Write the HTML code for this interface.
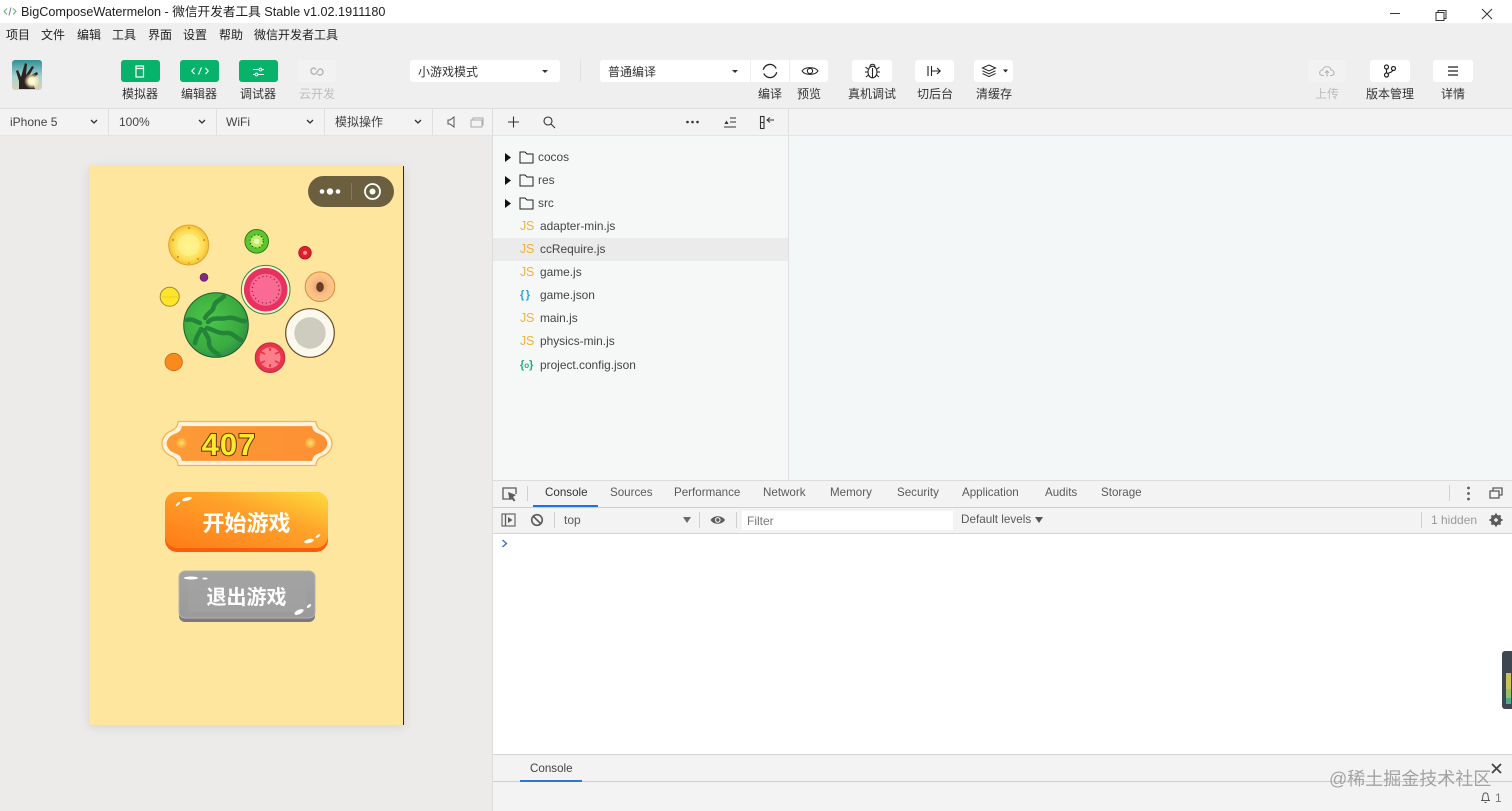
<!DOCTYPE html>
<html lang="zh"><head><meta charset="utf-8"><title>BigComposeWatermelon</title>
<style>
html,body{margin:0;padding:0;width:1512px;height:811px;overflow:hidden;background:#fff}
body{position:relative;font:12px "Liberation Sans","Noto Sans CJK SC",sans-serif;color:#333;filter:blur(.3px)}
.a{position:absolute}
.t{position:absolute;white-space:nowrap;line-height:16px}
.c{transform:translateX(-50%)}
.b{position:absolute;background:#fff;border-radius:3px;top:60px;height:22px}
.g{background:#07b36a}
svg{position:absolute;overflow:visible}
.tab{position:absolute;top:486px;line-height:14px;color:#5a5a5a;font-size:11.6px;white-space:nowrap}
.f{position:absolute;left:540px;line-height:16px;color:#444;white-space:nowrap;font-size:11.9px}
.d{position:absolute;left:520px;font-weight:400;color:#f0b03c;font-size:12.5px;line-height:16px;letter-spacing:-.3px}
</style></head><body>

<!-- title bar -->
<div class="a" style="left:0;top:0;width:1512px;height:23px;background:#fff"></div>
<svg style="left:3px;top:6px" width="14" height="11" fill="none" stroke="#5fb878" stroke-width="1.1"><path d="M4 2.500 1 5.500 4 8.500M10 2.500 13 5.500 10 8.500"/><path d="M8 1.500 6 9.500" stroke="#888"/></svg>
<div class="t" style="left:21px;top:4px;font-size:12.65px;color:#222">BigComposeWatermelon - 微信开发者工具 Stable v1.02.1911180</div>
<svg style="left:1390px;top:8px" width="110" height="14" fill="none" stroke="#333" stroke-width="1"><path d="M0 5.500H10"/><path d="M46 4.500h8v8h-8zM48 4.500V2.500h8v8h-2"/><path d="M92 1 102 11M102 1 92 11"/></svg>

<!-- toolbar -->
<div class="a" style="left:0;top:23px;width:1512px;height:85px;background:#efefef"></div>
<div class="a" style="left:0;top:108px;width:1512px;height:1px;background:#dedede"></div>
<div class="t" style="left:6px;top:27px;color:#222">项目</div>
<div class="t" style="left:41px;top:27px;color:#222">文件</div>
<div class="t" style="left:77px;top:27px;color:#222">编辑</div>
<div class="t" style="left:112px;top:27px;color:#222">工具</div>
<div class="t" style="left:148px;top:27px;color:#222">界面</div>
<div class="t" style="left:183px;top:27px;color:#222">设置</div>
<div class="t" style="left:219px;top:27px;color:#222">帮助</div>
<div class="t" style="left:254px;top:27px;color:#222">微信开发者工具</div>

<!-- avatar -->
<svg style="left:12px;top:60px" width="30" height="30">
<defs><linearGradient id="sky" x1="0" y1="0" x2="0" y2="1"><stop offset="0" stop-color="#2f8f97"/><stop offset=".55" stop-color="#a8d3cf"/><stop offset="1" stop-color="#d9d2b8"/></linearGradient>
<radialGradient id="sun"><stop offset="0" stop-color="#fff"/><stop offset=".45" stop-color="#fff0b8"/><stop offset="1" stop-color="#fff0b8" stop-opacity="0"/></radialGradient></defs>
<rect width="30" height="30" rx="3" fill="url(#sky)"/>
<path d="M7 29 7 21 4 11 6 10 9 17 13 3 15 4 14 15 20 6 22 7 17 16 25 12 26 14 20 20 23 29Z" fill="#2a2220"/>
<circle cx="20" cy="21" r="8" fill="url(#sun)"/>
</svg>

<!-- mode buttons -->
<div class="b g" style="left:121px;width:39px"></div>
<svg style="left:135px;top:65px" width="10" height="13" fill="none" stroke="#fff" stroke-width="1.200"><rect x="1" y="1" width="7.500" height="11"/><path d="M1 3.500H8.500"/></svg>
<div class="b g" style="left:180px;width:39px"></div>
<svg style="left:191px;top:67px" width="18" height="9" fill="none" stroke="#fff" stroke-width="1.100"><path d="M3.500 1 .8 4 3.500 7M14.500 1 17.200 4 14.500 7M10.500 .5 7.500 7.500"/></svg>
<div class="b g" style="left:239px;width:39px"></div>
<svg style="left:253px;top:67px" width="11" height="10" fill="none" stroke="#fff" stroke-width="1"><path d="M0 2.500H6M9 2.500H11M0 7.500H2M5 7.500H11"/><circle cx="7.500" cy="2.500" r="1.400"/><circle cx="3.500" cy="7.500" r="1.400"/></svg>
<div class="b" style="left:298px;width:38px;background:#f2f2f2"></div>
<svg style="left:310px;top:65px" width="14" height="12" fill="none" stroke="#b5b5b5" stroke-width="1.400"><path d="M6 4.500C4.500 2 1 3 1 6s3 4 5 2.500L8.500 5C10 3 13 4.200 13 7s-3.500 4-5.500 2"/></svg>
<div class="t c" style="left:140px;top:86px">模拟器</div>
<div class="t c" style="left:199px;top:86px">编辑器</div>
<div class="t c" style="left:258px;top:86px">调试器</div>
<div class="t c" style="left:317px;top:86px;color:#bdbdbd">云开发</div>

<!-- selects -->
<div class="b" style="left:410px;width:150px"></div>
<div class="t" style="left:418px;top:64px">小游戏模式</div>
<div class="a" style="left:542px;top:70px;border:3px solid transparent;border-top:3px solid #333"></div>
<div class="a" style="left:580px;top:60px;width:1px;height:22px;background:#e0e0e0"></div>
<div class="b" style="left:600px;width:150px;border-radius:3px 0 0 3px"></div>
<div class="t" style="left:608px;top:64px">普通编译</div>
<div class="a" style="left:732px;top:70px;border:3px solid transparent;border-top:3px solid #333"></div>
<div class="b" style="left:751px;width:38px;border-radius:0"></div>
<div class="b" style="left:790px;width:38px;border-radius:0 3px 3px 0"></div>
<svg style="left:762px;top:63px" width="16" height="16" fill="none" stroke="#222" stroke-width="1.300"><path d="M1.300 6.800A6.800 6.800 0 0 1 14.200 5.500M14.700 9.200A6.800 6.800 0 0 1 1.800 10.500"/></svg>
<svg style="left:801px;top:65px" width="18" height="12" fill="none" stroke="#222" stroke-width="1.100"><path d="M1 6C4 1.500 14 1.500 17 6 14 10.500 4 10.500 1 6Z"/><circle cx="9" cy="6" r="2.600"/></svg>
<div class="b" style="left:852px;width:40px"></div>
<svg style="left:864px;top:63px" width="17" height="16" fill="none" stroke="#222" stroke-width="1.100"><ellipse cx="8.500" cy="9" rx="4.500" ry="5.800"/><path d="M6 3.500C6 .5 11 .5 11 3.500M8.500 5V14.500M4 6 1.500 4M13 6 15.500 4M4 9H1M13 9H16M4.500 12 2 14M12.500 12 15 14"/></svg>
<div class="b" style="left:915px;width:39px"></div>
<svg style="left:927px;top:65px" width="15" height="12" fill="none" stroke="#222" stroke-width="1.100"><path d="M1 1V11M4.500 1V11M4.500 6H13M10 3 13.200 6 10 9"/></svg>
<div class="b" style="left:974px;width:39px"></div>
<svg style="left:982px;top:64px" width="30" height="14" fill="none" stroke="#222" stroke-width="1"><path d="M7 1 13.500 4 7 7 .5 4Z"/><path d="M.5 6.800 7 9.800 13.500 6.800M.5 9.600 7 12.600 13.500 9.600"/><path d="M21 5.500H26L23.500 8.500Z" fill="#222" stroke="none"/></svg>
<div class="t c" style="left:770px;top:86px">编译</div>
<div class="t c" style="left:809px;top:86px">预览</div>
<div class="t c" style="left:872px;top:86px">真机调试</div>
<div class="t c" style="left:935px;top:86px">切后台</div>
<div class="t c" style="left:994px;top:86px">清缓存</div>

<div class="b" style="left:1308px;width:38px;background:#f2f2f2"></div>
<svg style="left:1319px;top:65px" width="16" height="12" fill="none" stroke="#b5b5b5" stroke-width="1.100"><path d="M5 10.500H3.500C-.5 10.500 0 5 3.500 5 4.500 .5 11.500 .5 12 5 16 5 16 10.500 12.500 10.500H11M8 11.500V6M6 7.800 8 5.800 10 7.800"/></svg>
<div class="b" style="left:1370px;width:40px"></div>
<svg style="left:1383px;top:64px" width="14" height="14" fill="none" stroke="#222" stroke-width="1.200"><circle cx="3.500" cy="3" r="2"/><circle cx="3.500" cy="11" r="2"/><circle cx="10.500" cy="4.500" r="2"/><path d="M3.500 5V9M9.500 6.500C9 8.500 6.500 8.500 5 9.500"/></svg>
<div class="b" style="left:1433px;width:40px"></div>
<svg style="left:1448px;top:66px" width="10" height="10" stroke="#222" stroke-width="1.200"><path d="M0 1H10M0 5H10M0 9H10"/></svg>
<div class="t c" style="left:1327px;top:86px;color:#bdbdbd">上传</div>
<div class="t c" style="left:1390px;top:86px">版本管理</div>
<div class="t c" style="left:1453px;top:86px">详情</div>

<!-- secondary row -->
<div class="a" style="left:0;top:109px;width:1512px;height:26px;background:#f3f3f3"></div>
<div class="a" style="left:0;top:135px;width:1512px;height:1px;background:#e3e3e3"></div>
<div class="a" style="left:108px;top:109px;width:1px;height:26px;background:#e0e0e0"></div>
<div class="a" style="left:216px;top:109px;width:1px;height:26px;background:#e0e0e0"></div>
<div class="a" style="left:324px;top:109px;width:1px;height:26px;background:#e0e0e0"></div>
<div class="a" style="left:432px;top:109px;width:1px;height:26px;background:#e0e0e0"></div>
<div class="a" style="left:492px;top:109px;width:1px;height:702px;background:#dcdcdc"></div>
<div class="a" style="left:788px;top:109px;width:1px;height:371px;background:#e0e0e0"></div>
<div class="t" style="left:10px;top:114px;color:#444">iPhone 5</div>
<div class="t" style="left:119px;top:114px;color:#444">100%</div>
<div class="t" style="left:226px;top:114px;color:#444">WiFi</div>
<div class="t" style="left:335px;top:114px;color:#444">模拟操作</div>
<svg style="left:0;top:0" width="1512" height="136" fill="none" stroke="#333" stroke-width="1.300"><path d="M91 120l3 3 3-3M199 120l3 3 3-3M307 120l3 3 3-3M415 120l3 3 3-3"/>
<path d="M448 120h2l4-3v10l-4-3h-2z" stroke-width="1" stroke="#555"/>
<g stroke="#aaa" stroke-width="1"><rect x="471" y="120" width="11" height="7"/><path d="M473 120v-2h10v7h-1"/></g>
<path d="M508 122H519M513.500 116.500V127.500" stroke-width="1.100"/>
<circle cx="548" cy="121" r="4" stroke-width="1.100"/><path d="M551 124 555 128" stroke-width="1.100"/>
<path d="M724 127H736M730 118H736M730 122H736" stroke-width="1.100"/><path d="M724.500 124 726.500 120.500 728.500 124Z" fill="#333" stroke="none"/>
<rect x="760.500" y="116.500" width="3.500" height="12" stroke-width="1.100"/><path d="M760.500 122.500H764M774 120H767M770 117.500 767 120 770 122.500" stroke-width="1"/>
</svg>
<svg style="left:686px;top:120px" width="13" height="4" fill="#333"><circle cx="1.500" cy="2" r="1.300"/><circle cx="6.500" cy="2" r="1.300"/><circle cx="11.500" cy="2" r="1.300"/></svg>

<!-- simulator -->
<div class="a" style="left:0;top:136px;width:492px;height:675px;background:#ecebe9"></div>
<div class="a" style="left:89px;top:166px;width:315px;height:559px;background:#fee69f;box-shadow:0 2px 10px rgba(0,0,0,.1);border-right:1px solid #2d2a20;box-sizing:border-box"></div>
<div class="a" style="left:308px;top:176px;width:86px;height:31px;border-radius:16px;background:#6b5f40"></div>
<svg style="left:308px;top:176px" width="86" height="31"><circle cx="14" cy="15.500" r="2.300" fill="#fff"/><circle cx="22" cy="15.500" r="3.200" fill="#fff"/><circle cx="30" cy="15.500" r="2.300" fill="#fff"/><path d="M43.500 7V24" stroke="#85795c"/><circle cx="64.500" cy="15.500" r="7.500" fill="none" stroke="#fff" stroke-width="1.800"/><circle cx="64.500" cy="15.500" r="3" fill="#fff"/></svg>

<!-- fruits -->
<svg style="left:0;top:0" width="492" height="640">
<defs>
<radialGradient id="pine"><stop offset="0" stop-color="#fff48c"/><stop offset=".7" stop-color="#fee05a"/><stop offset="1" stop-color="#f7c02f"/></radialGradient>
<radialGradient id="wm" cx=".4" cy=".4" r=".7"><stop offset="0" stop-color="#4cc548"/><stop offset=".7" stop-color="#3aaa40"/><stop offset="1" stop-color="#2c8448"/></radialGradient>
<radialGradient id="pe"><stop offset="0" stop-color="#e89a5a"/><stop offset=".6" stop-color="#f8bf84"/><stop offset="1" stop-color="#fdc98e"/></radialGradient>
<linearGradient id="ban" x1="0" y1="0" x2="1" y2="0"><stop offset="0" stop-color="#fd9a36"/><stop offset="1" stop-color="#fd9033"/></linearGradient>
<linearGradient id="st" x1="1" y1="0" x2="0" y2="1"><stop offset="0" stop-color="#fedc3a"/><stop offset=".4" stop-color="#fea32a"/><stop offset="1" stop-color="#fe7a18"/></linearGradient>
<linearGradient id="gr" x1="0" y1="0" x2="0" y2="1"><stop offset="0" stop-color="#a3a3a3"/><stop offset="1" stop-color="#9a9a9a"/></linearGradient>
<path id="plate" d="M178 421.500H316C316 427 320 430 323 431C328 433 332 438 332 443.500C332 449 328 454 323 456C320 457 316 460 316 465.500H178C178 460 174 457 171 456C166 454 162 449 162 443.500C162 438 166 433 171 431C174 430 178 427 178 421.500Z"/>
</defs>
<circle cx="188.700" cy="245" r="20" fill="url(#pine)" stroke="#e2a42c" stroke-width="1"/>
<circle cx="188.700" cy="245" r="11" fill="#fff390" opacity=".7"/>
<g fill="#c98a1e"><circle cx="189" cy="228" r="1"/><circle cx="173" cy="240" r="1"/><circle cx="204" cy="240" r="1"/><circle cx="178" cy="257" r="1"/><circle cx="198" cy="259" r="1"/><circle cx="189" cy="263" r=".8"/></g>
<circle cx="256.700" cy="241.300" r="11.800" fill="#5ec62c" stroke="#2f7a22" stroke-width="1"/><circle cx="256.700" cy="241.300" r="6.500" fill="#b9ee62"/><circle cx="256.700" cy="241.300" r="2.800" fill="#eaf9b0"/>
<circle cx="256.700" cy="241.300" r="6.500" fill="none" stroke="#234" stroke-width="1.200" stroke-dasharray="1 2.500"/>
<circle cx="305" cy="252.700" r="6.300" fill="#e21d2e" stroke="#a4121f" stroke-width=".8"/><circle cx="305" cy="252.700" r="2" fill="#f98"/>
<circle cx="204" cy="277.300" r="4" fill="#7e2a80" stroke="#5a1c5c" stroke-width=".6"/>
<circle cx="265.700" cy="289.700" r="24.300" fill="#fdf6c8" stroke="#2e8a4a" stroke-width="1"/><circle cx="265.700" cy="289.700" r="21.800" fill="#e7315f"/><circle cx="265.700" cy="289.700" r="16" fill="#fb6a92"/><circle cx="265.700" cy="289.700" r="13.500" fill="none" stroke="#7c1c3c" stroke-width="1.200" stroke-dasharray="1 3"/>
<circle cx="320" cy="286.700" r="14.800" fill="url(#pe)" stroke="#e0883a" stroke-width="1"/><ellipse cx="320" cy="287" rx="3.800" ry="5" fill="#6a3a2a"/>
<circle cx="169.700" cy="296.700" r="9.500" fill="#fee529" stroke="#9c8a30" stroke-width="1"/><path d="M162 297H177" stroke="#f5c030" stroke-width=".8"/>
<circle cx="216" cy="325" r="32.300" fill="url(#wm)" stroke="#1e5c30" stroke-width="1"/>
<g fill="none" stroke="#24853a" stroke-width="4.500" stroke-linecap="round"><path d="M205 318C208 312 213 312 214 306 215 301 220 301 224 296"/><path d="M208 322C214 316 220 320 227 318 234 316 240 322 245 321"/><path d="M207 328C214 330 219 334 226 333 232 332 236 338 241 340"/><path d="M204 330C206 336 210 338 209 344 210 350 215 352 219 355"/><path d="M201 329C199 334 196 336 195 343"/><path d="M200 323C196 322 192 318 187 320"/></g>
<circle cx="310" cy="333" r="24.300" fill="#fbf8ee" stroke="#6a4a2a" stroke-width="1.200"/><circle cx="310" cy="333" r="15.700" fill="#cdccbf"/>
<circle cx="270" cy="357.700" r="14.800" fill="#e8344c" stroke="#c62840" stroke-width="1"/><circle cx="270" cy="357.700" r="10.500" fill="#fb7e88"/>
<g stroke="#e8344c" stroke-width="1.800" fill="none"><path d="M261 352l4 2M261 363l4-2M270 348v3M270 367v-3M279 352l-4 2M279 363l-4-2"/></g>
<circle cx="173.700" cy="362" r="8.700" fill="#fb8a1c" stroke="#c46a14" stroke-width=".8"/>

<!-- score banner -->
<use href="#plate" fill="#fff3dc" stroke="#f6b352" stroke-width="1.300"/>
<use href="#plate" fill="url(#ban)" stroke="none" transform="translate(247 443.500) scale(.945 .79) translate(-247 -443.500)"/>
<circle cx="181.500" cy="443" r="5" fill="#f9b548"/><circle cx="181.500" cy="443" r="2.500" fill="#fdd35e"/>
<circle cx="310.500" cy="443" r="5" fill="#f9b548"/><circle cx="310.500" cy="443" r="2.500" fill="#fdd35e"/>
<text x="229" y="455" text-anchor="middle" font-family="'Liberation Sans',sans-serif" font-weight="700" font-size="31" letter-spacing="1" fill="#ffe92e" stroke="#5e3b10" stroke-width="2" paint-order="stroke">407</text>

<!-- start -->
<rect x="165" y="492" width="163" height="60" rx="12" fill="#fd5c0c"/>
<rect x="165" y="492" width="163" height="56" rx="12" fill="url(#st)"/>
<ellipse cx="187" cy="499" rx="5" ry="1.800" fill="#fff" opacity=".9" transform="rotate(-15 187 499)"/><ellipse cx="178" cy="504" rx="3" ry="1.100" fill="#fff" opacity=".9" transform="rotate(-45 178 504)"/>
<ellipse cx="309" cy="541" rx="5" ry="2" fill="#fff" opacity=".95" transform="rotate(-15 309 541)"/><ellipse cx="318" cy="536" rx="2.800" ry="1.200" fill="#fff" opacity=".95" transform="rotate(-35 318 536)"/>
<text x="246.500" y="531" text-anchor="middle" font-family="'Noto Sans CJK SC',sans-serif" font-weight="700" font-size="22" fill="#fff">开始游戏</text>

<!-- quit -->
<rect x="179" y="571" width="136" height="51" rx="6" fill="#7b7b7b"/>
<rect x="179" y="571" width="136" height="47" rx="6" fill="url(#gr)" stroke="#b2b2b2" stroke-width="1"/>
<rect x="188" y="578" width="118" height="34" rx="3" fill="#a3a3a3" opacity=".6"/>
<ellipse cx="191" cy="578" rx="7" ry="1.500" fill="#fff"/><ellipse cx="205" cy="578.500" rx="2.500" ry="1" fill="#fff"/>
<ellipse cx="299" cy="612" rx="5" ry="2.200" fill="#fff" transform="rotate(-25 299 612)"/><ellipse cx="309" cy="606" rx="2.500" ry="1.300" fill="#fff" transform="rotate(-40 309 606)"/>
<text x="246.500" y="604" text-anchor="middle" font-family="'Noto Sans CJK SC',sans-serif" font-weight="700" font-size="20" fill="#fff">退出游戏</text>
</svg>

<!-- file tree -->
<div class="a" style="left:493px;top:136px;width:295px;height:344px;background:#f6f8f8"></div>
<div class="a" style="left:789px;top:136px;width:723px;height:344px;background:#f4f7f7"></div>
<div class="a" style="left:493px;top:238px;width:295px;height:23px;background:#ebebeb"></div>
<svg style="left:505px;top:150px" width="30" height="60">
<g fill="#111"><path d="M0 3 6 7.500 0 12Z"/><path d="M0 26 6 30.500 0 35Z"/><path d="M0 49 6 53.500 0 58Z"/></g>
<g fill="none" stroke="#222" stroke-width="1"><path d="M15 2H20L22 4H28V13H15Z"/><path d="M15 25H20L22 27H28V36H15Z"/><path d="M15 48H20L22 50H28V59H15Z"/></g></svg>
<div class="f" style="left:538px;top:149px">cocos</div>
<div class="f" style="left:538px;top:172px">res</div>
<div class="f" style="left:538px;top:195px">src</div>
<div class="d" style="top:218px">JS</div><div class="f" style="top:218px">adapter-min.js</div>
<div class="d" style="top:241px">JS</div><div class="f" style="top:241px">ccRequire.js</div>
<div class="d" style="top:264px">JS</div><div class="f" style="top:264px">game.js</div>
<div class="d" style="top:287px;color:#2aa0dc;font-weight:700;left:520px;letter-spacing:1.500px;font-size:11px">{}</div><div class="f" style="top:287px">game.json</div>
<div class="d" style="top:310px">JS</div><div class="f" style="top:310px">main.js</div>
<div class="d" style="top:333px">JS</div><div class="f" style="top:333px">physics-min.js</div>
<div class="d" style="top:357px;color:#17b37a;font-weight:700;left:520px;font-size:11px;letter-spacing:0">{<span style="font-size:8px">o</span>}</div><div class="f" style="top:357px">project.config.json</div>

<!-- devtools -->
<div class="a" style="left:493px;top:480px;width:1019px;height:1px;background:#dcdcdc"></div>
<div class="a" style="left:493px;top:481px;width:1019px;height:26px;background:#f3f3f3"></div>
<div class="a" style="left:493px;top:507px;width:1019px;height:1px;background:#d0d0d0"></div>
<div class="a" style="left:493px;top:508px;width:1019px;height:25px;background:#f3f3f3"></div>
<div class="a" style="left:493px;top:533px;width:1019px;height:1px;background:#d4d4d4"></div>
<div class="a" style="left:533px;top:505px;width:65px;height:2px;background:#1a73e8"></div>
<div class="tab" style="left:545px;color:#333">Console</div>
<div class="tab" style="left:610px">Sources</div>
<div class="tab" style="left:674px">Performance</div>
<div class="tab" style="left:763px">Network</div>
<div class="tab" style="left:830px">Memory</div>
<div class="tab" style="left:897px">Security</div>
<div class="tab" style="left:962px">Application</div>
<div class="tab" style="left:1045px">Audits</div>
<div class="tab" style="left:1101px">Storage</div>
<svg style="left:0;top:0" width="1512" height="811" fill="none" stroke="#5c5c5c" stroke-width="1.300">
<path d="M514 499H503V488H516V494"/><path d="M508 492 516 495 513 497 515.500 500.500 513.800 501.500 511.500 498 509.500 500Z" fill="#5c5c5c" stroke="none"/>
<path d="M527.500 486V501M1449.500 485V501M554.500 512V528M699.500 512V528M736.500 512V528M1421.500 512V528" stroke="#d0d0d0" stroke-width="1"/>
<rect x="502" y="514" width="13" height="12" stroke-width="1.100"/><path d="M505.500 514V526"/><path d="M508 517 512.500 520 508 523Z" fill="#5c5c5c" stroke="none"/>
<circle cx="537" cy="520" r="5.300" stroke-width="1.600"/><path d="M533.500 516.500 540.500 523.500" stroke-width="1.600"/>
<path d="M683 517H691L687 523Z" fill="#6a6a6a" stroke="none"/>
<path d="M710.500 520C713.500 515 722 515 725 520 722 525 713.500 525 710.500 520Z" fill="#5c5c5c" stroke="none"/><circle cx="717.800" cy="520" r="2.900" fill="#f3f3f3" stroke="none"/><circle cx="717.800" cy="520" r="1.700" fill="#5c5c5c" stroke="none"/>
<path d="M1035 517H1043L1039 523Z" fill="#555" stroke="none"/>
<path d="M502.500 540 506.500 543.500 502.500 547" stroke="#2f6fd0" stroke-width="1.300"/>
<g fill="#5c5c5c" stroke="none"><circle cx="1468.500" cy="488" r="1.400"/><circle cx="1468.500" cy="493.500" r="1.400"/><circle cx="1468.500" cy="499" r="1.400"/>
<circle cx="509" cy="764" r="1.400"/><circle cx="509" cy="769" r="1.400"/><circle cx="509" cy="774" r="1.400"/></g>
<rect x="1490" y="491" width="9" height="7" stroke-width="1.300"/><path d="M1493 491V488H1502V495H1499" stroke-width="1.300"/>
<circle cx="1496" cy="520" r="3.800" stroke-width="3"/><path d="M1496 513.500V526.500M1489.500 520H1502.500M1491.500 515.500 1500.500 524.500M1500.500 515.500 1491.500 524.500" stroke-width="2"/><circle cx="1496" cy="520" r="1.800" fill="#f3f3f3" stroke="none"/>
</svg>
<div class="t" style="left:564px;top:512px;color:#5a5a5a">top</div>
<div class="a" style="left:742px;top:511px;width:211px;height:19px;background:#fff"></div>
<div class="t" style="left:747px;top:513px;color:#777">Filter</div>
<div class="t" style="left:961px;top:512px;color:#5a5a5a;font-size:11.7px">Default levels</div>
<div class="t" style="left:1431px;top:512px;color:#9a9a9a">1 hidden</div>

<!-- meter widget -->
<div class="a" style="left:1502px;top:651px;width:10px;height:58px;background:#3e4650;border-radius:3px 0 0 3px"></div>
<div class="a" style="left:1506px;top:673px;width:5px;height:16px;background:#c9c25a"></div>
<div class="a" style="left:1506px;top:689px;width:5px;height:9px;background:#8fc06a"></div>
<div class="a" style="left:1506px;top:698px;width:5px;height:6px;background:#4fa98a"></div>

<!-- drawer -->
<div class="a" style="left:493px;top:754px;width:1019px;height:1px;background:#d4d4d4"></div>
<div class="a" style="left:493px;top:755px;width:1019px;height:26px;background:#f3f3f3"></div>
<div class="a" style="left:493px;top:781px;width:1019px;height:1px;background:#cfcfcf"></div>
<div class="a" style="left:493px;top:782px;width:1019px;height:29px;background:#f3f3f3"></div>
<div class="a" style="left:520px;top:780px;width:62px;height:2px;background:#2f74d0"></div>
<div class="tab" style="left:530px;top:762px;color:#444">Console</div>
<svg style="left:1492px;top:764px" width="9" height="9" stroke="#444" stroke-width="1.800"><path d="M0 0 9 9M9 0 0 9"/></svg>
<div class="t" style="left:1329px;top:767px;font-size:18px;line-height:24px;color:#a2a2a2">@稀土掘金技术社区</div>
<svg style="left:1480px;top:791px" width="11" height="13" fill="none" stroke="#555" stroke-width="1"><path d="M1 9.500H10M2 9.500C3 8 2.500 6 3 4.500 3.500 1 7.500 1 8 4.500 8.500 6 8 8 9 9.500M4.500 11.500H6.500"/></svg>
<div class="t" style="left:1495px;top:790px;color:#777">1</div>

</body></html>
